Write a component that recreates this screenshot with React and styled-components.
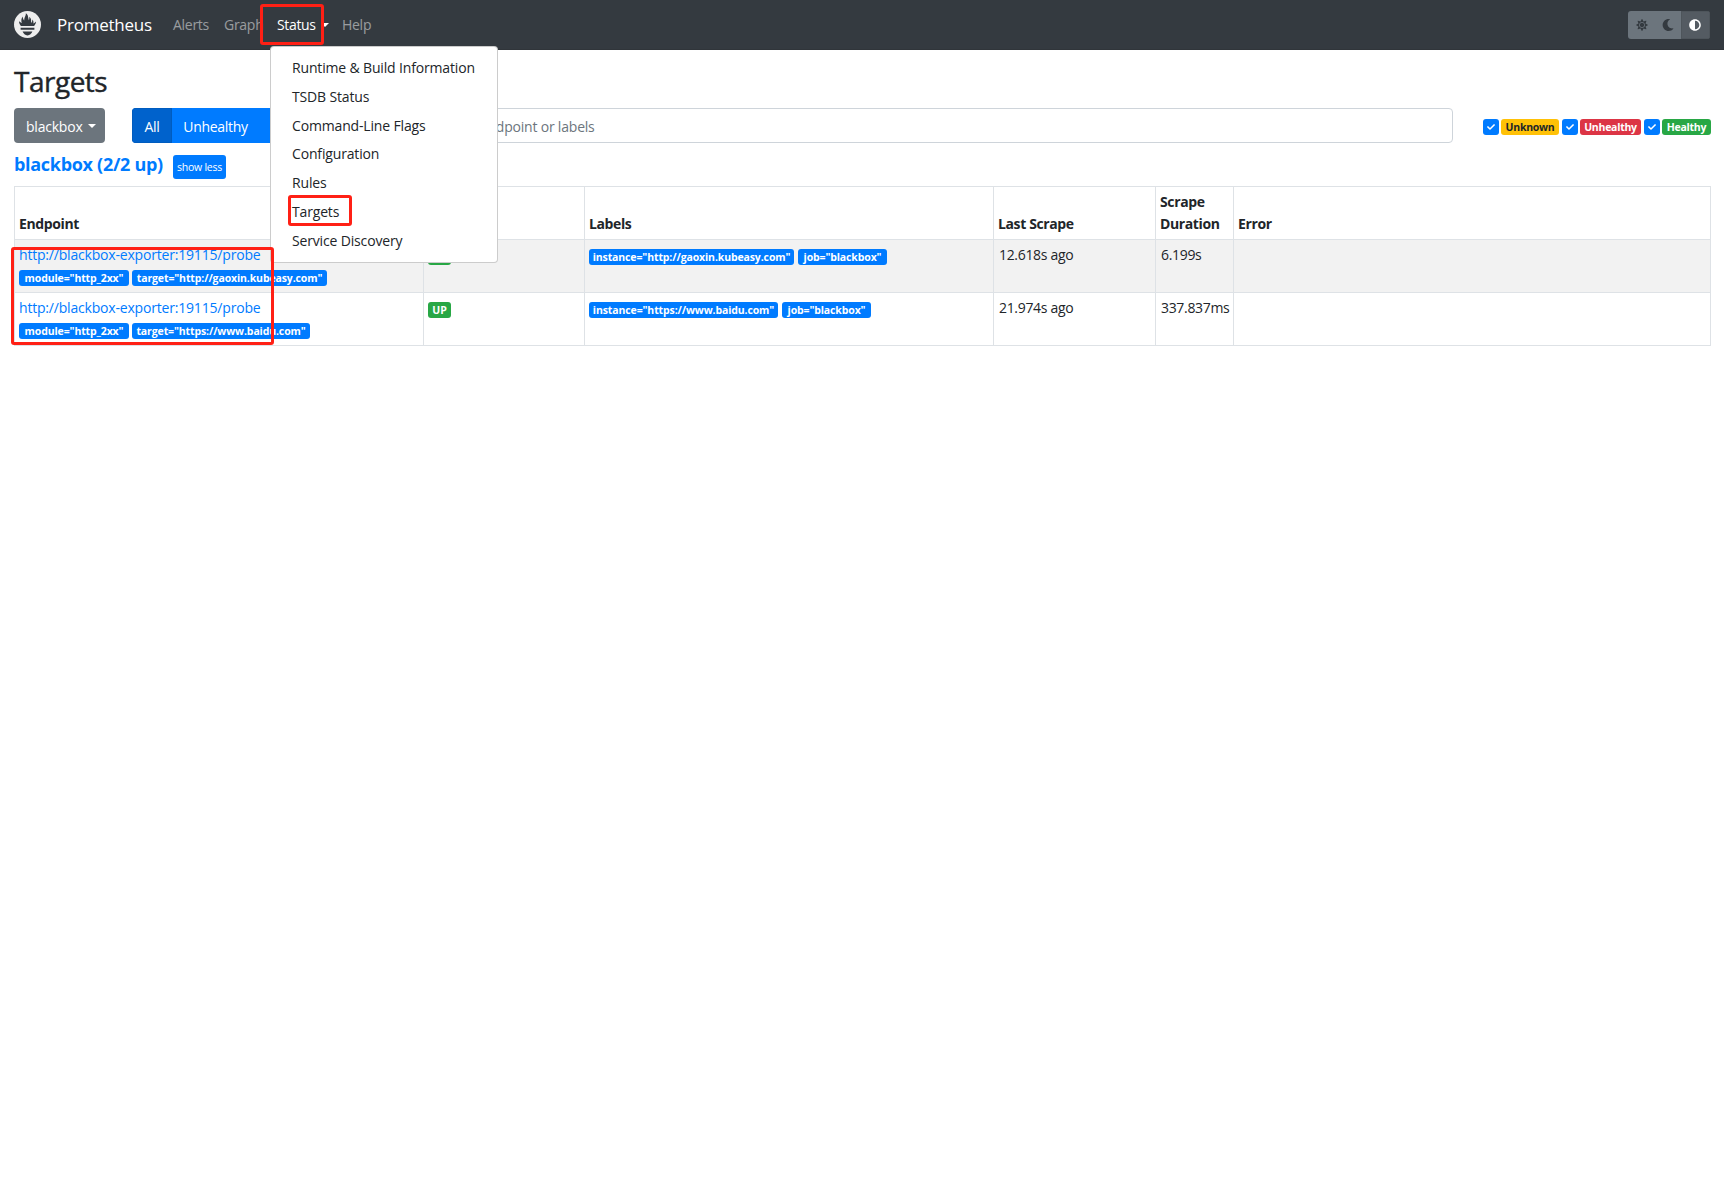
import React from "react";
import styled, { createGlobalStyle } from "styled-components";
import { FaAdjust, FaCheck, FaMoon, FaSearch, FaSun } from "react-icons/fa";

const menuItems = [
  "Runtime & Build Information",
  "TSDB Status",
  "Command-Line Flags",
  "Configuration",
  "Rules",
  "Targets",
  "Service Discovery",
];

const filters = [
  { name: "Unknown", color: "#ffc107", text: "#212529", width: 58 },
  { name: "Unhealthy", color: "#dc3545", text: "#fff", width: 61 },
  { name: "Healthy", color: "#28a745", text: "#fff", width: 49 },
];

const targets = [
  {
    endpoint: "http://blackbox-exporter:19115/probe",
    params: [
      { text: 'module="http_2xx"', width: 110 },
      { text: 'target="http://gaoxin.kubeasy.com"', width: 195 },
    ],
    labels: [
      { text: 'instance="http://gaoxin.kubeasy.com"', width: 205 },
      { text: 'job="blackbox"', width: 89 },
    ],
    lastScrape: "12.618s ago",
    duration: "6.199s",
  },
  {
    endpoint: "http://blackbox-exporter:19115/probe",
    params: [
      { text: 'module="http_2xx"', width: 110 },
      { text: 'target="https://www.baidu.com"', width: 178 },
    ],
    labels: [
      { text: 'instance="https://www.baidu.com"', width: 189 },
      { text: 'job="blackbox"', width: 89 },
    ],
    lastScrape: "21.974s ago",
    duration: "337.837ms",
  },
];

const GlobalStyle = createGlobalStyle`
  * {
    box-sizing: border-box;
  }
  body {
    margin: 0;
    background: #fff;
    color: #212529;
    font-family: "Open Sans", "Noto Sans", sans-serif;
    font-size: 14px;
    line-height: 22px;
    letter-spacing: -0.22px;
  }
`;

const Navbar = styled.nav`
  display: flex;
  align-items: center;
  height: 50px;
  padding: 0 14px;
  background: #343a40;
  border-bottom: 1px solid #30353a;
`;

const Brand = styled.div`
  display: flex;
  align-items: center;
  gap: 16px;
  width: 152px;
`;

const BrandName = styled.span`
  color: #fff;
  font-size: 17px;
  letter-spacing: -0.25px;
`;

const NavLink = styled.div`
  display: flex;
  align-items: center;
  width: ${(p) => (p.$width ? p.$width + "px" : "auto")};
  padding: 1px 7px 0;
  color: ${(p) => (p.$active ? "#fff" : "rgba(255, 255, 255, 0.5)")};
  letter-spacing: ${(p) => (p.$active ? "-0.35px" : "-0.28px")};
`;

const Caret = styled.i`
  margin-left: 5px;
  margin-top: ${(p) => (p.$nav ? "0" : "-2px")};
  border: 4px solid transparent;
  border-top-color: currentColor;
  border-bottom: 0;
`;

const Dropdown = styled.div`
  position: relative;
  width: 65px;
`;

const Menu = styled.div`
  position: absolute;
  z-index: 10;
  top: 33px;
  left: 0;
  width: 228px;
  height: 217px;
  padding: 7px 0;
  background: #fff;
  border: 1px solid rgba(0, 0, 0, 0.2);
  border-radius: 4px;
`;

const MenuItem = styled.div`
  height: 28.8px;
  padding: 3px 21px;
  white-space: nowrap;
  letter-spacing: -0.16px;
`;

const ThemeGroup = styled.div`
  display: flex;
  width: 82px;
  height: 28px;
  margin-left: auto;
  border-radius: 3px;
  overflow: hidden;
`;

const ThemeButton = styled.div`
  display: flex;
  flex: ${(p) => (p.$active ? "0 0 29px" : "1")};
  align-items: center;
  justify-content: center;
  padding-left: ${(p) => (p.$active ? "0" : "1px")};
  padding-right: ${(p) => (p.$active ? "1px" : "0")};
  background: ${(p) => (p.$active ? "#545b62" : "#6c757d")};
  border: ${(p) => (p.$active ? "1px solid #4e555b" : "0")};
  color: ${(p) => (p.$active ? "#fff" : "#343a40")};
  font-size: 12px;
`;

const Container = styled.main`
  padding: 13px 13px 0 14px;
`;

const Title = styled.h2`
  margin: 0 0 9px;
  font-size: 28px;
  font-weight: 500;
  line-height: 36px;
  letter-spacing: -0.5px;
  -webkit-text-stroke: 0.4px currentColor;
`;

const Toolbar = styled.div`
  display: flex;
  align-items: center;
  height: 35px;
`;

const PoolButton = styled.div`
  display: flex;
  align-items: center;
  width: 91px;
  height: 35px;
  padding: 2px 11px 0 12px;
  background: #6c757d;
  border-radius: 4px;
  color: #fff;
`;

const ButtonGroup = styled.div`
  display: flex;
  height: 35px;
  margin-left: 27px;
  border-radius: 4px;
  overflow: hidden;
`;

const GroupButton = styled.div`
  display: flex;
  align-items: center;
  justify-content: center;
  width: ${(p) => p.$width}px;
  padding-top: 2px;
  background: ${(p) => (p.$active ? "#0062cc" : "#007bff")};
  border: ${(p) => (p.$active ? "1px solid #005cbf" : "0")};
  color: #fff;
  letter-spacing: -0.3px;
`;

const Search = styled.div`
  display: flex;
  width: 1080px;
  height: 35px;
  margin-left: 10px;
`;

const SearchIcon = styled.div`
  display: flex;
  align-items: center;
  justify-content: center;
  width: 38px;
  background: #e9ecef;
  border: 1px solid #ced4da;
  border-right: 0;
  border-radius: 4px 0 0 4px;
`;

const Input = styled.input`
  flex: 1;
  padding: 3px 14px 0;
  border: 1px solid #ced4da;
  border-radius: 0 4px 4px 0;
  font: inherit;
  letter-spacing: -0.2px;
  outline: none;

  &::placeholder {
    color: #6c757d;
  }
`;

const Filters = styled.div`
  display: flex;
  gap: 3px;
  margin-left: auto;
  padding-top: 3px;
`;

const Filter = styled.div`
  display: flex;
  gap: 2px;
`;

const Check = styled.span`
  display: flex;
  align-items: center;
  justify-content: center;
  width: 16px;
  height: 16px;
  background: #007bff;
  border-radius: 3px;
  color: #fff;
  font-size: 8px;
`;

const Badge = styled.span`
  width: ${(p) => p.$width}px;
  height: 16px;
  background: ${(p) => p.$color || "#007bff"};
  border-radius: 3px;
  color: ${(p) => p.$text || "#fff"};
  font-size: 10.5px;
  font-weight: 700;
  line-height: 16px;
  letter-spacing: ${(p) => (p.$narrow ? "-0.25px" : "-0.12px")};
  text-align: center;
  white-space: nowrap;
`;

const Badges = styled.div`
  display: flex;
  gap: ${(p) => p.$gap || 0}px;
  margin-top: ${(p) => (p.$top ? "5px" : "4px")};
`;

const Pool = styled.div`
  display: flex;
  align-items: center;
  gap: 10px;
  height: 43px;
  padding-top: 5px;
`;

const PoolName = styled.h3`
  width: 149px;
  margin: -6px 0 0;
  color: #007bff;
  font-size: 18px;
  font-weight: 700;
  letter-spacing: -0.3px;
  white-space: nowrap;
`;

const ShowLess = styled.div`
  width: 53px;
  height: 24px;
  background: #007bff;
  border-radius: 3px;
  color: #fff;
  font-size: 10.5px;
  line-height: 24px;
  text-align: center;
`;

const Table = styled.table`
  width: 1697px;
  table-layout: fixed;
  border-collapse: collapse;
`;

const Th = styled.th`
  width: ${(p) => (p.$width ? p.$width + "px" : "auto")};
  height: 53px;
  padding: 4px;
  border: 1px solid #dee2e6;
  text-align: left;
  vertical-align: bottom;
  letter-spacing: -0.38px;
`;

const Row = styled.tr`
  height: 53px;
  background: ${(p) => (p.$striped ? "#f2f2f2" : "#fff")};
`;

const Td = styled.td`
  padding: ${(p) => (p.$value ? "4px 0 4px 5px" : "4px")};
  border: 1px solid #dee2e6;
  vertical-align: top;
  letter-spacing: ${(p) => (p.$value ? "-0.32px" : "inherit")};
`;

const EndpointLink = styled.div`
  color: #007bff;
  letter-spacing: -0.19px;
`;

const Mark = styled.div`
  position: absolute;
  z-index: 20;
  border: 3px solid #ff2015;
  border-radius: 3px;
`;

const StatusMark = styled(Mark)`
  left: 260px;
  top: 4px;
  width: 64px;
  height: 41px;
`;

const TargetsMark = styled(Mark)`
  left: 288px;
  top: 195px;
  width: 64px;
  height: 31px;
`;

const EndpointMark = styled(Mark)`
  left: 11px;
  top: 247px;
  width: 263px;
  height: 98px;
`;

const Logo = () => (
  <svg width="27" height="27" viewBox="0 0 27 27">
    <circle cx="13.5" cy="13.5" r="13.5" fill="#eeeeee" />
    <path
      fill="#343a40"
      d="M6.9 14.9C5.7 13.4 5 12 5 10.3c1 .9 1.8 1.5 2.8 1.7C7 9.3 7.3 7.3 8.7 5.4c.1 1.8.6 2.9 1.5 4.1.1-1.7.2-2.5.8-3.8.5-1.1 1-2.2.8-3.5 1.6.9 2.2 2.2 2.3 3.8.1 1 .5 1.8.7 3.3.6-1.3.7-2.2.4-3.6 1.6 1.2 2 2.7 1.9 4 0 .9-.1 1.7.1 2.3.8-1.1 1.1-2.2 1.2-3.6 1.1 1.6 1.3 2.6.9 4 1.1-.4 1.8-1 2.7-1.9 0 1.7-.6 3-1.9 4.4zM6.6 16.7h13.8v2.1H6.6zM8.6 20.5h9.8c-.9 2.3-2.6 3.9-4.9 3.9s-4-1.6-4.9-3.9z"
    />
  </svg>
);

const BadgeList = ({ items, ...rest }) => (
  <Badges {...rest}>
    {items.map((item) => (
      <Badge key={item.text} $width={item.width}>
        {item.text}
      </Badge>
    ))}
  </Badges>
);

const App = () => {
  return (
    <>
      <GlobalStyle />
      <Navbar>
        <Brand>
          <Logo />
          <BrandName>Prometheus</BrandName>
        </Brand>
        <NavLink $width={51}>Alerts</NavLink>
        <NavLink $width={53}>Graph</NavLink>
        <Dropdown>
          <NavLink $active>
            Status
            <Caret $nav />
          </NavLink>
          <Menu>
            {menuItems.map((item) => (
              <MenuItem key={item}>{item}</MenuItem>
            ))}
          </Menu>
        </Dropdown>
        <NavLink>Help</NavLink>
        <ThemeGroup>
          <ThemeButton>
            <FaSun />
          </ThemeButton>
          <ThemeButton>
            <FaMoon />
          </ThemeButton>
          <ThemeButton $active>
            <FaAdjust />
          </ThemeButton>
        </ThemeGroup>
      </Navbar>

      <Container>
        <Title>Targets</Title>
        <Toolbar>
          <PoolButton>
            blackbox
            <Caret />
          </PoolButton>
          <ButtonGroup>
            <GroupButton $width={40} $active>
              All
            </GroupButton>
            <GroupButton $width={87}>Unhealthy</GroupButton>
            <GroupButton $width={104} />
          </ButtonGroup>
          <Search>
            <SearchIcon>
              <FaSearch />
            </SearchIcon>
            <Input placeholder="Filter by endpoint or labels" />
          </Search>
          <Filters>
            {filters.map((f) => (
              <Filter key={f.name}>
                <Check>
                  <FaCheck />
                </Check>
                <Badge $color={f.color} $text={f.text} $width={f.width} $narrow>
                  {f.name}
                </Badge>
              </Filter>
            ))}
          </Filters>
        </Toolbar>

        <Pool>
          <PoolName>blackbox (2/2 up)</PoolName>
          <ShowLess>show less</ShowLess>
        </Pool>

        <Table>
          <thead>
            <tr>
              <Th $width={409}>Endpoint</Th>
              <Th $width={161}>State</Th>
              <Th $width={409}>Labels</Th>
              <Th $width={162}>Last Scrape</Th>
              <Th $width={78}>Scrape Duration</Th>
              <Th>Error</Th>
            </tr>
          </thead>
          <tbody>
            {targets.map((t, i) => (
              <Row key={t.lastScrape} $striped={i % 2 === 0}>
                <Td>
                  <EndpointLink>{t.endpoint}</EndpointLink>
                  <BadgeList items={t.params} $gap={3} />
                </Td>
                <Td>
                  <Badges $top>
                    <Badge $color="#28a745" $width={23}>
                      UP
                    </Badge>
                  </Badges>
                </Td>
                <Td>
                  <BadgeList items={t.labels} $gap={4} $top />
                </Td>
                <Td $value>{t.lastScrape}</Td>
                <Td $value>{t.duration}</Td>
                <Td />
              </Row>
            ))}
          </tbody>
        </Table>
      </Container>

      {/* highlighted areas */}
      <StatusMark />
      <TargetsMark />
      <EndpointMark />
    </>
  );
};

export default App;
